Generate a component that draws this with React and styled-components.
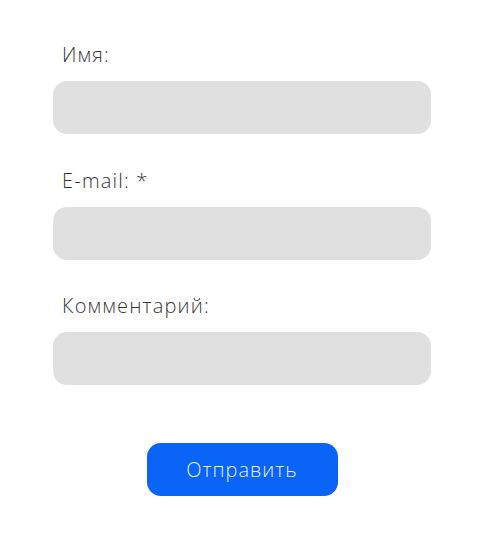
import React from 'react'
import styled, { createGlobalStyle } from 'styled-components'

const GlobalStyle = createGlobalStyle`
  body {
    margin: 0;
    background: #fff;
    font-family: "Open Sans", "Liberation Sans", sans-serif;
  }
`

const Form = styled.form`
  width: 378px;
  margin: 0 auto;
  padding-top: 43px;
  display: flex;
  flex-direction: column;
  gap: 34.5px;
`

const Field = styled.label`
  display: flex;
  flex-direction: column;
  gap: 14px;
`

const Caption = styled.span`
  padding-left: 9px;
  font-size: 20px;
  line-height: 24px;
  font-weight: 300;
  letter-spacing: 1.2px;
  color: #363636;
`

const Input = styled.input`
  box-sizing: border-box;
  height: 53px;
  width: 100%;
  border: none;
  border-radius: 14px;
  background: #e0e0e0;
  padding: 0 18px;
  font: inherit;
  font-size: 18px;
  outline: none;
`

const Actions = styled.div`
  display: flex;
  justify-content: center;
  padding-top: 23.5px;
`

const Submit = styled.button`
  width: 191px;
  height: 53px;
  border: none;
  border-radius: 14px;
  background: #0a64f7;
  color: #e8efff;
  font-family: inherit;
  font-size: 20px;
  font-weight: 300;
  letter-spacing: 1px;
  cursor: pointer;
`

const fields = [
  { name: 'name', label: 'Имя:', type: 'text' },
  { name: 'email', label: 'E-mail: *', type: 'email' },
  { name: 'comment', label: 'Комментарий:', type: 'text' },
]

const App = () => {
  return (
    <>
      <GlobalStyle />
      <Form onSubmit={e => e.preventDefault()}>
        {fields.map(f => (
          <Field key={f.name}>
            <Caption>{f.label}</Caption>
            <Input name={f.name} type={f.type} />
          </Field>
        ))}
        <Actions>
          <Submit type="submit">Отправить</Submit>
        </Actions>
      </Form>
    </>
  )
}

export default App
